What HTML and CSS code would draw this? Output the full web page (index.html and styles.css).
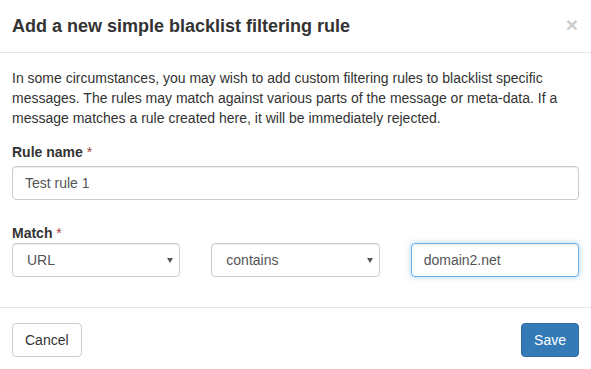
FILE: index.html
```html
<!DOCTYPE html>
<html lang="en">
<head>
    <meta charset="UTF-8">
    <meta name="viewport" content="width=device-width, initial-scale=1.0">
    <title>Add a new simple blacklist filtering rule</title>
    <link rel="stylesheet" href="styles.css">
</head>
<body>

    <div class="modal">
        <div class="modal-header">
            <h4 class="modal-title">Add a new simple blacklist filtering rule</h4>
            <button class="close" type="button">&times;</button>
        </div>

        <div class="modal-body">
            <p class="intro">In some circumstances, you may wish to add custom filtering rules to blacklist specific messages. The rules may match against various parts of the message or meta-data. If a message matches a rule created here, it will be immediately rejected.</p>

            <div class="form-group">
                <label for="rule-name">Rule name <span class="req">*</span></label>
                <input type="text" id="rule-name" class="form-control" value="Test rule 1">
            </div>

            <div class="form-group match-group">
                <label for="match-field">Match <span class="req">*</span></label>
                <div class="match-row">
                    <div class="select-wrap">
                        <select id="match-field" class="form-control">
                            <option>URL</option>
                            <option>Subject</option>
                            <option>Sender</option>
                        </select>
                    </div>
                    <div class="select-wrap">
                        <select id="match-op" class="form-control">
                            <option>contains</option>
                            <option>equals</option>
                            <option>starts with</option>
                        </select>
                    </div>
                    <input type="text" id="match-value" class="form-control focused" value="domain2.net">
                </div>
            </div>
        </div>

        <div class="modal-footer">
            <button class="btn btn-default" type="button">Cancel</button>
            <button class="btn btn-primary" type="button">Save</button>
        </div>
    </div>

</body>
</html>
```

FILE: styles.css
```css
body {
    margin: 0;
    font-family: "Liberation Sans", Arial, sans-serif;
    font-size: 14px;
    line-height: 20px;
    color: #333;
    background-color: #fff;
}
.modal {
    width: 591px;
}
.modal-header {
    display: flex;
    align-items: flex-start;
    justify-content: space-between;
    padding: 13px 12px 13px 12px;
    border-bottom: 1px solid #e5e5e5;
}
.modal-title {
    margin: 0;
    font-size: 18px;
    font-weight: bold;
    line-height: 26px;
}
.close {
    margin: 0;
    padding: 0;
    border: none;
    background: none;
    font-family: "Liberation Sans", Arial, sans-serif;
    font-size: 21px;
    font-weight: bold;
    line-height: 21px;
    color: #000;
    opacity: 0.2;
    text-shadow: 0 1px 0 #fff;
    cursor: pointer;
    margin-right: 1px;
    margin-top: 1px;
}
.modal-body {
    padding: 15px 12px 15px 12px;
}
.intro {
    margin: 0 0 14px 0;
}
.form-group {
    margin-bottom: 15px;
}
.form-group label {
    display: block;
    font-weight: bold;
    margin-bottom: 4px;
}
.match-group {
    margin-top: 23px;
}
.match-group label {
    margin-bottom: 0;
}
.req {
    color: #a94442;
    font-weight: normal;
}
.form-control {
    display: block;
    box-sizing: border-box;
    width: 100%;
    height: 34px;
    padding: 6px 12px;
    font-family: "Liberation Sans", Arial, sans-serif;
    font-size: 14px;
    line-height: 20px;
    color: #555;
    background-color: #fff;
    border: 1px solid #ccc;
    border-radius: 4px;
    box-shadow: inset 0 1px 1px rgba(0, 0, 0, 0.075);
}
.form-control.focused {
    border-color: #66afe9;
    outline: 0;
    box-shadow: inset 0 1px 1px rgba(0, 0, 0, 0.075), 0 0 6px rgba(102, 175, 233, 0.5);
}
.match-row {
    display: grid;
    grid-template-columns: 1fr 1fr 1fr;
    column-gap: 31px;
}
.select-wrap {
    position: relative;
}
.select-wrap select {
    appearance: none;
    -webkit-appearance: none;
    padding-left: 14px;
}
.select-wrap::after {
    content: "";
    position: absolute;
    right: 7px;
    top: 15px;
    width: 0;
    height: 0;
    border-left: 3px solid transparent;
    border-right: 3px solid transparent;
    border-top: 5px solid #555;
    pointer-events: none;
}
.modal-footer {
    display: flex;
    justify-content: space-between;
    padding: 15px 12px;
    border-top: 1px solid #e5e5e5;
}
.btn {
    height: 34px;
    padding: 6px 12px;
    font-family: "Liberation Sans", Arial, sans-serif;
    font-size: 14px;
    line-height: 20px;
    border: 1px solid transparent;
    border-radius: 4px;
    cursor: pointer;
}
.btn-default {
    color: #333;
    background-color: #fff;
    border-color: #ccc;
}
.btn-primary {
    color: #fff;
    background-color: #337ab7;
    border-color: #2e6da4;
}
```
